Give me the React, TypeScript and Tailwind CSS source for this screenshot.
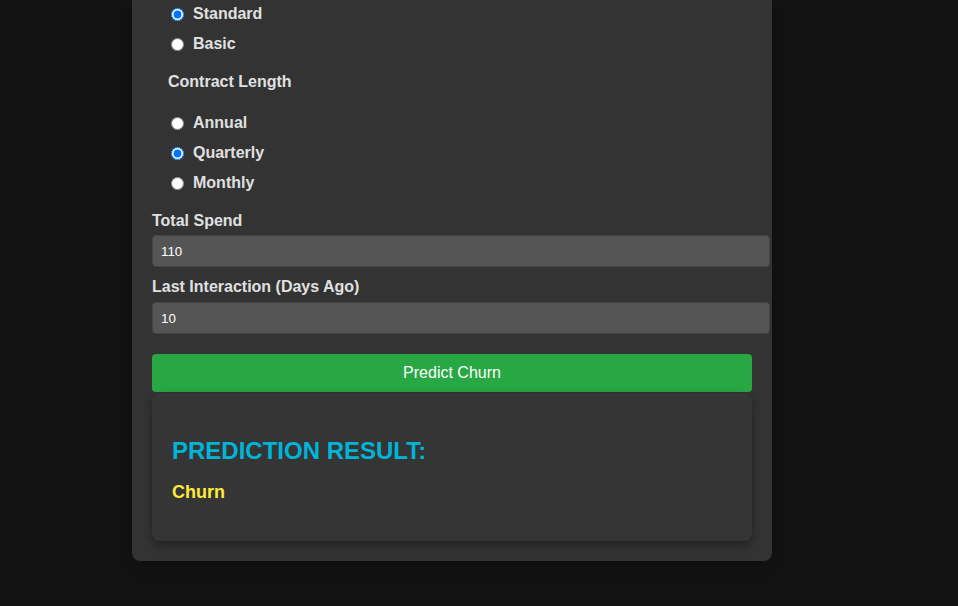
import { useState } from "react";

function Radio({ name, label, checked, onChange }: { name: string; label: string; checked: boolean; onChange: () => void }) {
  return (
    <label className="flex items-center h-[30px] font-bold text-[16px] text-[#e0e0e0]">
      <input
        type="radio"
        name={name}
        checked={checked}
        onChange={onChange}
        className="ml-[5px] mr-[9px] w-[13px] h-[13px] accent-[#0075ff]"
      />
      {label}
    </label>
  );
}

function App() {
  const [plan, setPlan] = useState("Standard");
  const [contract, setContract] = useState("Quarterly");
  const [spend, setSpend] = useState("110");
  const [last, setLast] = useState("10");

  return (
    <div className="min-h-screen bg-[#121212] flex pl-[132px]" style={{ fontFamily: "Arial, 'Liberation Sans', sans-serif" }}>
      <div className="w-[640px] h-[561px] bg-[#333333] rounded-b-lg px-5 shadow-lg">
        <fieldset className="ml-[2px] pl-[12px] -mt-[1px]">
          {["Standard", "Basic"].map((p) => (
            <Radio key={p} name="plan" label={p} checked={plan === p} onChange={() => setPlan(p)} />
          ))}
        </fieldset>

        <fieldset className="ml-[2px] pl-[12px] mt-[14px]">
          <legend className="px-[2px] font-bold text-[16px] text-[#e0e0e0] h-[18px] leading-[18px]">Contract Length</legend>
          <div className="pt-[17px]">
            {["Annual", "Quarterly", "Monthly"].map((c) => (
              <Radio key={c} name="contract" label={c} checked={contract === c} onChange={() => setContract(c)} />
            ))}
          </div>
        </fieldset>

        <label className="block mt-[14px] font-bold text-[16px] leading-[18px] text-[#e0e0e0]">Total Spend</label>
        <input
          value={spend}
          onChange={(e) => setSpend(e.target.value)}
          className="mt-[5px] w-[618px] h-[32px] px-2 bg-[#555555] border border-[#444444] rounded text-white text-[13.33px] outline-none"
        />

        <label className="block mt-[11px] font-bold text-[16px] leading-[18px] text-[#e0e0e0]">Last Interaction (Days Ago)</label>
        <input
          value={last}
          onChange={(e) => setLast(e.target.value)}
          className="mt-[6px] w-[618px] h-[32px] px-2 bg-[#555555] border border-[#444444] rounded text-white text-[13.33px] outline-none"
        />

        <button className="block mt-[20px] w-[600px] h-[38px] bg-[#28a745] text-white text-[16px] rounded">
          Predict Churn
        </button>

        <div className="mt-[1px] w-[600px] h-[148px] bg-[#353535] rounded-lg shadow-[0_4px_10px_rgba(0,0,0,0.35)] px-5 pt-[44px]">
          <h2 className="text-[24px] leading-[28px] font-bold text-[#00b4d8] uppercase">Prediction Result:</h2>
          <p className="mt-[16px] text-[18px] leading-[22px] font-bold text-[#ffeb3b]">Churn</p>
        </div>
      </div>
    </div>
  );
}

export default App;
